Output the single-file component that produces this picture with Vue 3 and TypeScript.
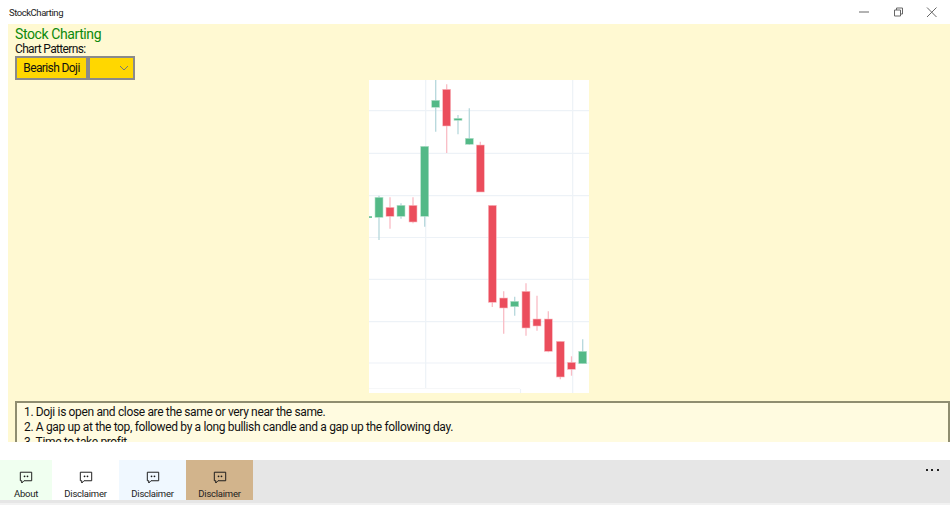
<script setup lang="ts">
interface Candle { x: number; top: number; bottom: number; wickTop: number; wickBottom: number; up: boolean }
const candles: Candle[] = [
  { x: 379, top: 197.3, bottom: 217.3, wickTop: 195.7, wickBottom: 240, up: true },
  { x: 390, top: 207.3, bottom: 216.3, wickTop: 197.3, wickBottom: 228.7, up: false },
  { x: 401, top: 205.3, bottom: 216.3, wickTop: 203.3, wickBottom: 218.7, up: true },
  { x: 413, top: 205.3, bottom: 222, wickTop: 197.3, wickBottom: 223.3, up: false },
  { x: 424.7, top: 146.3, bottom: 216.3, wickTop: 146.3, wickBottom: 226.7, up: true },
  { x: 435.7, top: 100.3, bottom: 107.3, wickTop: 80, wickBottom: 131.7, up: true },
  { x: 446.7, top: 89.3, bottom: 126, wickTop: 84.3, wickBottom: 153, up: false },
  { x: 458, top: 118.3, bottom: 120.3, wickTop: 115, wickBottom: 134.3, up: true },
  { x: 469.3, top: 138.3, bottom: 144.3, wickTop: 108.3, wickBottom: 145, up: true },
  { x: 480.3, top: 145, bottom: 192, wickTop: 141.7, wickBottom: 192, up: false },
  { x: 492.3, top: 205.3, bottom: 302.3, wickTop: 205.3, wickBottom: 307, up: false },
  { x: 503.7, top: 298, bottom: 308, wickTop: 291.3, wickBottom: 333.7, up: false },
  { x: 514.7, top: 301.3, bottom: 306.7, wickTop: 296.7, wickBottom: 315.7, up: true },
  { x: 526, top: 291.3, bottom: 328, wickTop: 283.3, wickBottom: 335.7, up: false },
  { x: 537, top: 319, bottom: 326, wickTop: 295.7, wickBottom: 330.7, up: false },
  { x: 548.3, top: 319, bottom: 351.3, wickTop: 311.3, wickBottom: 352.3, up: false },
  { x: 560.3, top: 341.3, bottom: 377, wickTop: 341.3, wickBottom: 379.3, up: false },
  { x: 571.5, top: 362.3, bottom: 369.3, wickTop: 356.3, wickBottom: 375.7, up: false },
  { x: 582.7, top: 351.3, bottom: 363.7, wickTop: 339.3, wickBottom: 363.7, up: true },
]
const hLines = [110.7, 153.3, 195.7, 237.5, 279.3, 321.7, 363]
const tabs = [
  { label: 'About', cls: 'tab-about' },
  { label: 'Disclaimer', cls: 'tab-white' },
  { label: 'Disclaimer', cls: 'tab-blue' },
  { label: 'Disclaimer', cls: 'tab-tan' },
]
</script>

<template>
  <div class="window">
    <header class="titlebar">
      <span class="app-name">StockCharting</span>
      <div class="controls">
        <svg class="ctl" width="34" height="24" viewBox="0 0 34 24"><path d="M12 12h10" /></svg>
        <svg class="ctl" width="34" height="24" viewBox="0 0 34 24"><path d="M13.500 10h6v6h-6zM15.500 10V8h6v6h-2" /></svg>
        <svg class="ctl" width="34" height="24" viewBox="0 0 34 24"><path d="M12 7.500l9.500 9.500M21.500 7.500L12 17" /></svg>
      </div>
    </header>

    <main class="panel">
      <h1 class="heading">Stock Charting</h1>
      <div class="label">Chart Patterns:</div>
      <div class="combo">
        <div class="combo-value">Bearish Doji</div>
        <div class="combo-arrow">
          <svg width="10" height="6" viewBox="0 0 10 6"><path d="M1 1l4 4 4-4" /></svg>
        </div>
      </div>
      <div class="chart-wrap">
        <svg class="chart" width="220" height="313" viewBox="369 80 220 313">
          <rect x="369" y="80" width="220" height="313" fill="#fff" />
          <line v-for="y in hLines" :key="y" x1="369" x2="589" :y1="y" :y2="y" class="grid" />
          <line x1="425.700" x2="425.700" y1="80" y2="388" class="grid" />
          <line x1="572.700" x2="572.700" y1="80" y2="393" class="grid" />
          <line x1="369" x2="520" y1="388.500" y2="388.500" class="axis" />
          <line x1="520.500" x2="520.500" y1="389" y2="393" class="grid" />
          <rect x="369" y="216.300" width="3" height="1.500" fill="#53b987" />
          <g v-for="c in candles" :key="c.x">
            <line :x1="c.x" :x2="c.x" :y1="c.wickTop" :y2="c.wickBottom" :class="c.up ? 'wick-up' : 'wick-down'" />
            <rect :x="c.x - 4" :y="c.top" width="8" :height="c.bottom - c.top" :class="c.up ? 'body-up' : 'body-down'" />
          </g>
        </svg>
      </div>
      <div class="notes">
        <p>1. Doji is open and close are the same or very near the same.</p>
        <p>2. A gap up at the top, followed by a long bullish candle and a gap up the following day.</p>
        <p>3. Time to take profit.</p>
      </div>
    </main>

    <div class="spacer"></div>

    <nav class="commandbar">
      <button v-for="(t, i) in tabs" :key="i" class="tab" :class="t.cls">
        <svg width="16" height="16" viewBox="0 0 16 16" class="tab-icon">
          <path d="M1 1.500h14v10.500H5.500L2.800 14.800V12H1z" />
          <circle cx="6.200" cy="6.500" r="1.100" />
          <circle cx="9.800" cy="6.500" r="1.100" />
        </svg>
        <span>{{ t.label }}</span>
      </button>
      <div class="more"><i></i><i></i><i></i></div>
    </nav>
    <div class="footer"></div>
  </div>
</template>

<style>
html, body { margin: 0; background: #fff; }
</style>

<style scoped>
.window {
  width: 950px;
  height: 505px;
  display: flex;
  flex-direction: column;
  overflow: hidden;
  font-family: Roboto, "Open Sans", sans-serif;
  color: #111;
  background: #fff;
}
.titlebar {
  height: 24px;
  flex: none;
  display: flex;
  align-items: center;
  justify-content: space-between;
  padding-left: 9px;
}
.app-name { font-size: 9.500px; letter-spacing: -0.450px; color: #222; }
.controls { display: flex; margin-right: 1px; }
.ctl { display: block; }
.ctl path { fill: none; stroke: #666; stroke-width: 1; }
.panel {
  height: 418px;
  flex: none;
  margin-left: 8px;
  padding: 0 0 0 7px;
  background: #fff9d2;
  display: flex;
  flex-direction: column;
  overflow: hidden;
}
.heading {
  margin: 0;
  height: 18px;
  line-height: 20px;
  font-size: 14px;
  font-weight: 400;
  letter-spacing: -0.400px;
  color: #0c8a0c;
}
.label {
  height: 14px;
  line-height: 15px;
  font-size: 12px;
  letter-spacing: -0.650px;
}
.combo { display: flex; height: 24px; flex: none; }
.combo-value, .combo-arrow {
  box-sizing: border-box;
  background: #ffd700;
  border: 2px solid #8a8a8a;
  display: flex;
  align-items: center;
  justify-content: center;
}
.combo-value { width: 73px; font-size: 12px; letter-spacing: -0.600px; white-space: nowrap; }
.combo-arrow { width: 47px; padding-left: 24px; }
.combo-arrow svg { display: block; }
.combo-arrow path { fill: none; stroke: #777; stroke-width: 1; }
.chart-wrap { height: 313px; flex: none; display: flex; justify-content: center; margin-left: -7px; }
.chart { display: block; filter: blur(0.400px); }
.grid { stroke: #edf2f7; stroke-width: 1.200; }
.axis { stroke: #f6f7f8; stroke-width: 1; }
.wick-up { stroke: #b6d8dc; stroke-width: 1.300; }
.wick-down { stroke: #f9bcc5; stroke-width: 1.300; }
.body-up { fill: #53b987; stroke: #b5e0cb; stroke-width: 0.600; }
.body-down { fill: #eb4d5c; stroke: #f8bcc3; stroke-width: 0.600; }
.notes {
  margin-top: 8px;
  box-sizing: border-box;
  height: 41px;
  flex: none;
  overflow: hidden;
  padding: 2px 0 0 7px;
  border: 2px solid #8f8d70;
  border-bottom: none;
  background: #fffbe0;
  font-size: 12px;
  letter-spacing: -0.350px;
  line-height: 15px;
}
.notes p { margin: 0; white-space: nowrap; }
.spacer { height: 18px; flex: none; }
.commandbar {
  height: 43px;
  flex: none;
  background: #e6e6e6;
  display: flex;
  align-items: flex-start;
  position: relative;
}
.tab {
  height: 40px;
  width: 67px;
  border: none;
  padding: 11px 0 0;
  margin: 0;
  display: flex;
  flex-direction: column;
  align-items: center;
  font-family: inherit;
  font-size: 9.500px;
  letter-spacing: -0.250px;
  color: #222;
  line-height: 13px;
}
.tab-icon { display: block; margin-bottom: 3px; }
.tab-icon path { fill: none; stroke: #1a1a1a; stroke-width: 1.200; }
.tab-icon circle { fill: #1a1a1a; }
.tab-about { width: 52px; background: #f0fff0; }
.tab-white { background: #fff; }
.tab-blue { background: #f0f8ff; }
.tab-tan { background: #d2b48c; }
.more {
  position: absolute;
  right: 11px;
  top: 9px;
  display: flex;
  gap: 3.700px;
}
.more i { display: block; width: 2px; height: 2px; background: #222; }
.footer { flex: 1; background: #f2f2f2; }
</style>
